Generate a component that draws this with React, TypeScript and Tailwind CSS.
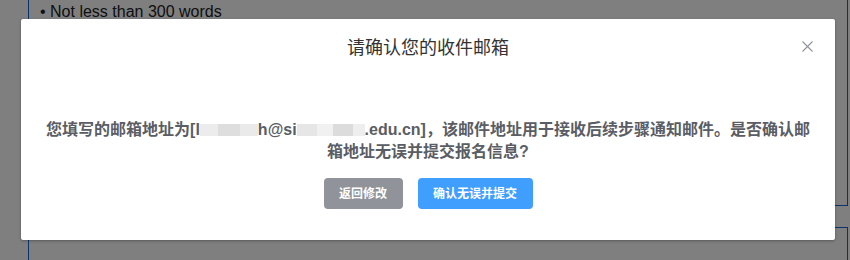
import React from "react";

const font = "font-['Liberation_Sans','Noto_Sans_CJK_SC',sans-serif]";

function Blur({ parts }: { parts: { w: string; c: string }[] }) {
  return (
    <span className="inline-flex h-[12px] align-[-1px] blur-[0.6px]">
      {parts.map((p, i) => (
        <span key={i} className={`${p.w} ${p.c} h-full`} />
      ))}
    </span>
  );
}

function CloseIcon() {
  return (
    <svg viewBox="0 0 11 11" className="w-[11px] h-[11px]">
      <path d="M0.5 0.5 L10.5 10.5 M10.5 0.5 L0.5 10.5" stroke="#909399" strokeWidth="1.1" fill="none" />
    </svg>
  );
}

export default function App() {
  return (
    <div className={`relative w-[850px] h-[260px] overflow-hidden bg-white ${font}`}>
      {/* page behind the dialog */}
      <div className="flex flex-col">
        <div className="ml-[28px] w-[820px] h-[206px] border-l border-r border-b border-[#1766d6] pl-[11px] pt-[3px]">
          <p className="text-[16px] leading-[18px] text-[#222]">• Not less than 300 words</p>
        </div>
        <div className="ml-[28px] mt-[21px] w-[820px] h-[40px] border-l border-r border-t border-[#1766d6]" />
      </div>

      {/* mask + dialog */}
      <div className="absolute inset-0 bg-black/50 pl-[21px] pt-[19px]">
        <div className="relative w-[814px] h-[221px] bg-white rounded-[2px] shadow-[0_1px_3px_rgba(0,0,0,0.3)]">
          <div className="pt-[17px] text-center">
            <h2 className="text-[18px] leading-6 text-[#333] font-normal">请确认您的收件邮箱</h2>
            <button className="absolute right-[22px] top-[22px] flex">
              <CloseIcon />
            </button>
          </div>

          <div className="mt-[59px] px-6 text-center text-[16px] leading-[22px] font-bold text-[#5a5d63]">
            您填写的邮箱地址为[l
            <Blur
              parts={[
                { w: "w-[18px]", c: "bg-[#ececec]" },
                { w: "w-[22px]", c: "bg-[#dedede]" },
                { w: "w-[18px]", c: "bg-[#eaeaea]" },
              ]}
            />
            h@si
            <Blur
              parts={[
                { w: "w-[20px]", c: "bg-[#e6e6e6]" },
                { w: "w-[16px]", c: "bg-[#f1f1f1]" },
                { w: "w-[20px]", c: "bg-[#dcdcdc]" },
                { w: "w-[12px]", c: "bg-[#eeeeee]" },
              ]}
            />
            .edu.cn]，该邮件地址用于接收后续步骤通知邮件。是否确认邮箱地址无误并提交报名信息?
          </div>

          <div className="mt-[15px] flex justify-center gap-[15px]">
            <button className="w-[79px] h-[31px] rounded-[4px] bg-[#909399] text-white text-[12px] font-bold">
              返回修改
            </button>
            <button className="w-[115px] h-[31px] rounded-[4px] bg-[#409eff] text-white text-[12px] font-bold">
              确认无误并提交
            </button>
          </div>
        </div>
      </div>
    </div>
  );
}
